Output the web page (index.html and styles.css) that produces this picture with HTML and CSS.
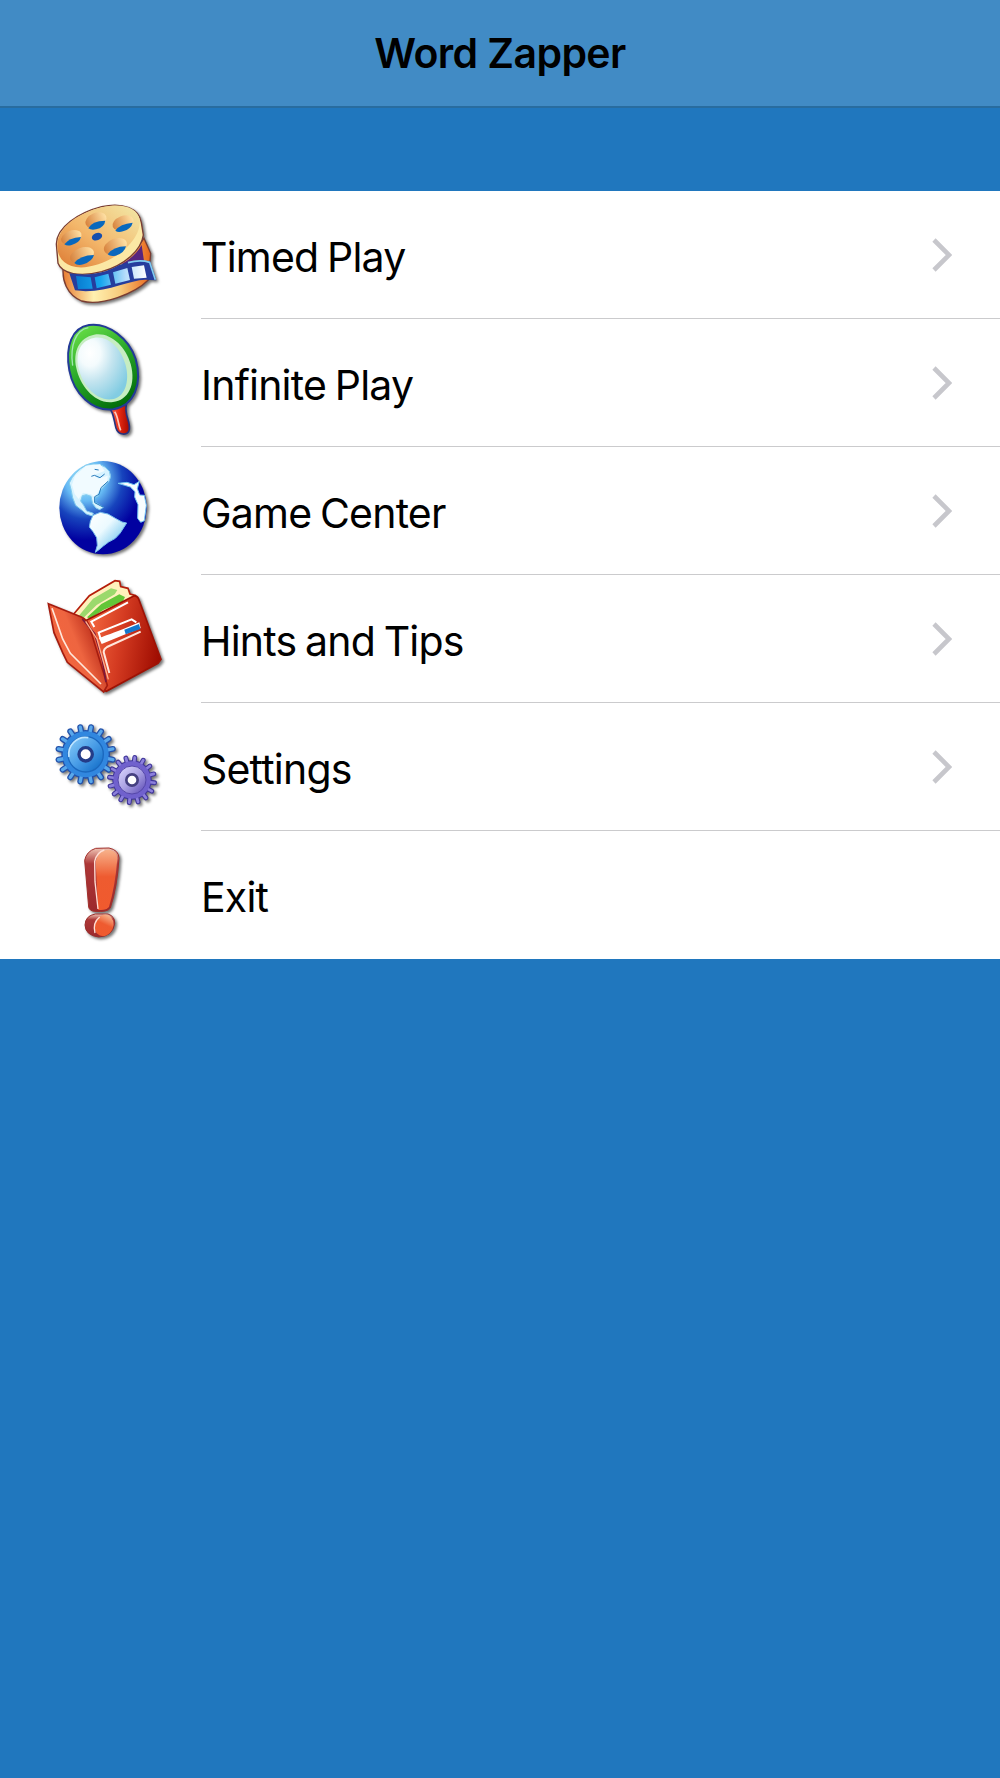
FILE: index.html
```html
<!DOCTYPE html>
<html lang="en">
<head>
    <meta charset="UTF-8">
    <meta name="viewport" content="width=device-width, initial-scale=1.0">
    <title>Word Zapper</title>
    <link rel="stylesheet" href="styles.css">
</head>
<body>
    <header class="navbar">
        <h1>Word Zapper</h1>
    </header>

    <ul class="menu">
        <li class="menu-item">
            <svg class="icon" viewBox="0 3 390 384">
                <defs>
                    <linearGradient id="reel-top" x1="0" y1="1" x2="1" y2="0">
                        <stop offset="0" stop-color="#dc7932"/>
                        <stop offset=".45" stop-color="#f3b66a"/>
                        <stop offset="1" stop-color="#f2e9a8"/>
                    </linearGradient>
                    <linearGradient id="reel-side">
                        <stop offset="0" stop-color="#e87c32"/>
                        <stop offset=".35" stop-color="#fff0b0"/>
                        <stop offset=".65" stop-color="#f8cc7d"/>
                        <stop offset="1" stop-color="#e96519"/>
                    </linearGradient>
                    <linearGradient id="reel-hole">
                        <stop offset="0" stop-color="#d7823d"/>
                        <stop offset="1" stop-color="#ffe2a6"/>
                    </linearGradient>
                    <linearGradient id="film" gradientUnits="userSpaceOnUse" x1="108" y1="0" x2="320" y2="0">
                        <stop offset="0" stop-color="#087bd0"/>
                        <stop offset=".35" stop-color="#18a6ee"/>
                        <stop offset=".7" stop-color="#b6ddfb"/>
                        <stop offset="1" stop-color="#fff"/>
                    </linearGradient>
                </defs>
                <path d="M70 230C65 270 80 315 125 333C185 350 285 310 325 270L332 190L312 145L270 200Z" fill="url(#reel-side)" stroke="#793c32" stroke-width="4"/>
                <path d="M245 222Q285 200 305 165L312 213L290 225Z" fill="#58247e"/>
                <path d="M49 162C50 112 115 68 185 50C250 36 298 56 304 98L310 135C304 180 255 225 185 245C120 262 66 252 54 220Z" fill="#fbe8a4" stroke="#793c32" stroke-width="4"/>
                <path d="M52 172C48 110 120 68 185 52C245 38 294 52 299 90C304 145 240 202 175 223C105 246 55 225 52 172Z" fill="url(#reel-top)"/>
                <g fill="url(#reel-hole)">
                    <ellipse cx="168" cy="91" rx="33" ry="22" transform="rotate(-22 168 91)"/>
                    <ellipse cx="249" cy="99" rx="33" ry="21" transform="rotate(-22 249 99)"/>
                    <ellipse cx="94" cy="142" rx="32" ry="20" transform="rotate(-22 94 142)"/>
                    <ellipse cx="226" cy="169" rx="36" ry="23" transform="rotate(-22 226 169)"/>
                    <ellipse cx="126" cy="196" rx="37" ry="23" transform="rotate(-20 126 196)"/>
                </g>
                <g fill="#0968bd">
                    <path d="M145 115Q155 93 196 92Q193 112 168 118Q153 121 145 115Z"/>
                    <path d="M226 122Q240 101 278 98Q274 116 249 124Q234 129 226 122Z"/>
                    <path d="M73 163Q86 144 123 141Q119 158 95 165Q81 169 73 163Z"/>
                    <path d="M203 193Q219 170 258 169Q253 190 227 197Q211 201 203 193Z"/>
                    <path d="M103 219Q120 196 162 195Q157 214 130 223Q112 228 103 219Z"/>
                    <ellipse cx="171" cy="140" rx="16" ry="11" transform="rotate(-20 171 140)" fill="#174ead"/>
                </g>
                <path d="M88 250Q165 261 220 234Q270 205 330 213L349 271L315 269C265 270 190 314 105 301Z" fill="#263d9d"/>
                <path d="M108 258L152 262L158 296L114 297ZM164 262L205 251L213 284L170 295ZM219 247L262 234L270 270L226 281ZM275 231L312 226L320 263L282 266Z" fill="url(#film)"/>
                <path d="M264 218Q300 208 329 217L346 269" fill="none" stroke="#80ccf0" stroke-width="5"/>
            </svg>
            <span class="label">Timed Play</span>
            <svg class="chevron" viewBox="0 0 20 34"><path d="M2 2L17 17L2 32"/></svg>
        </li>

        <li class="menu-item">
            <svg class="icon" viewBox="0 10 390 384">
                <defs>
                    <linearGradient id="rim" x1=".2" y1="0" x2=".7" y2="1">
                        <stop offset="0" stop-color="#68df45"/>
                        <stop offset=".45" stop-color="#2caa2b"/>
                        <stop offset="1" stop-color="#006b09"/>
                    </linearGradient>
                    <radialGradient id="glass" cx=".25" cy=".25" r=".85">
                        <stop offset="0" stop-color="#fff"/>
                        <stop offset=".25" stop-color="#f4fbfd"/>
                        <stop offset=".55" stop-color="#c3e4ef"/>
                        <stop offset="1" stop-color="#82cce2"/>
                    </radialGradient>
                    <linearGradient id="handle">
                        <stop offset="0" stop-color="#ff7659"/>
                        <stop offset=".5" stop-color="#e52911"/>
                        <stop offset="1" stop-color="#a40800"/>
                    </linearGradient>
                </defs>
                <path d="M207 277C220 285 221 310 228 337C235 360 264 361 268 341C271 315 252 297 259 268Z" fill="url(#handle)" stroke="#26327f" stroke-width="5"/>
                <path d="M224 288C235 303 233 322 242 344" fill="none" stroke="#ffc9bd" stroke-width="5"/>
                <path d="M147 28C205 20 267 69 287 130C308 205 283 269 220 281C157 288 101 234 88 164C75 91 96 36 147 28Z" fill="url(#rim)" stroke="#233a97" stroke-width="6"/>
                <path d="M145 36C108 43 89 87 98 150" fill="none" stroke="#a0e7b0" stroke-width="4"/>
                <path d="M162 57C211 48 257 92 272 145C289 207 265 254 219 259C163 266 119 208 109 157C98 105 119 66 162 57Z" fill="#c6edc2"/>
                <path d="M161 67C202 58 242 96 256 145C272 200 252 248 215 251C167 256 126 207 115 155C106 109 122 75 161 67Z" fill="url(#glass)"/>
            </svg>
            <span class="label">Infinite Play</span>
            <svg class="chevron" viewBox="0 0 20 34"><path d="M2 2L17 17L2 32"/></svg>
        </li>

        <li class="menu-item">
            <svg class="icon" viewBox="0 6 390 384">
                <defs>
                    <radialGradient id="ocean" cx=".3" cy=".2" r=".65">
                        <stop offset="0" stop-color="#a9edff"/>
                        <stop offset=".35" stop-color="#66baf4"/>
                        <stop offset=".65" stop-color="#1744bd"/>
                        <stop offset="1" stop-color="#0101a0"/>
                    </radialGradient>
                    <linearGradient id="south" x1="0" y1="0" x2="1" y2="1">
                        <stop offset="0" stop-color="#fff"/>
                        <stop offset=".4" stop-color="#ecfaff"/>
                        <stop offset=".8" stop-color="#78c8ef"/>
                    </linearGradient>
                </defs>
                <ellipse cx="189" cy="188" rx="131" ry="140" fill="url(#ocean)"/>
                <path d="M88 114Q102 81 137 61Q184 47 208 79Q216 96 206 110L190 126L180 137L174 154L166 157L164 171L179 180L190 187L179 194L168 189L158 176L153 154L139 149L127 152L122 168L131 181L140 198L160 205L157 213L139 207L124 194L107 181L98 158L94 137Z" fill="#d7f3ff" stroke="#83ccee" stroke-width="3"/>
                <path d="M105 92L139 62L180 57L194 78L163 89L174 101L203 92L202 109L176 139L164 157L153 148L129 143L116 162L104 147L96 119Z" fill="#fafeff" opacity=".75"/>
                <path d="M204 109L183 128L177 148L164 155L164 173L181 182L190 186M154 94L163 91L180 98L194 87M164 73L176 75" fill="none" stroke="#287bbd" stroke-width="3"/>
                <path d="M159 211L181 202L204 207L226 220L246 231L260 234L251 248L240 265L226 280L206 291L190 303L177 314L166 322L172 301L170 278L159 260L148 246L151 229Z" fill="url(#south)" stroke="#78bdeb" stroke-width="3"/>
                <path d="M234 115L261 112L282 119L298 109L292 131L299 150L313 151L319 181L313 227L302 232L293 220L294 179L284 156L285 140L271 126L254 121Z" fill="#f8fdff" stroke="#72c5f1" stroke-width="3"/>
            </svg>
            <span class="label">Game Center</span>
            <svg class="chevron" viewBox="0 0 20 34"><path d="M2 2L17 17L2 32"/></svg>
        </li>

        <li class="menu-item">
            <svg class="icon" viewBox="0 15 390 384">
                <defs>
                    <linearGradient id="cover" x1="0" y1=".4" x2="1" y2=".6">
                        <stop offset="0" stop-color="#f56a40"/>
                        <stop offset=".45" stop-color="#d53c22"/>
                        <stop offset="1" stop-color="#9d0b00"/>
                    </linearGradient>
                    <linearGradient id="flap" x1=".2" y1=".8" x2="1" y2=".3">
                        <stop offset="0" stop-color="#f4663e"/>
                        <stop offset=".45" stop-color="#ee6540"/>
                        <stop offset="1" stop-color="#a41308"/>
                    </linearGradient>
                </defs>
                <path d="M98 136L148 77L225 32L239 34L242 50L264 55L270 72L286 76L293 105L151 174Z" fill="#fff0bc" stroke="#b51d0b" stroke-width="5"/>
                <path d="M111 144L159 86L213 55L232 60L224 73L170 105L120 154Z" fill="#9bd96c"/>
                <path d="M141 142L184 102L238 73L255 81L248 95L191 119L150 146Z" fill="#63c638"/>
                <path d="M135 153L281 78Q291 75 296 87L363 268L354 280L199 364L187 359Z" fill="url(#cover)" stroke="#9e1205" stroke-width="5"/>
                <path d="M25 101L124 141Q143 150 149 172L202 346L191 366L82 277L68 248L42 188Z" fill="url(#flap)" stroke="#a51c0f" stroke-width="5"/>
                <path d="M36 115L45 140L68 207L91 250L183 342" fill="none" stroke="#ffe7db" stroke-width="5"/>
                <path d="M127 147L164 191L187 270L198 336" fill="none" stroke="#7c183c" stroke-width="5"/>
                <path d="M137 154L171 207L205 328" fill="none" stroke="#ffb18d" stroke-width="4"/>
                <path d="M163 171L154 155L264 97M182 207L176 188L275 148L289 157" fill="none" stroke="#fff" stroke-width="6"/>
                <path d="M177 204Q190 200 248 178L298 157L302 174L185 222Z" fill="#fff"/>
                <path d="M253 179L297 162L301 177L257 193Z" fill="#1477cd"/>
                <path d="M208 309L191 246Q191 237 201 231L302 185" fill="none" stroke="#ffe7dc" stroke-width="6"/>
            </svg>
            <span class="label">Hints and Tips</span>
            <svg class="chevron" viewBox="0 0 20 34"><path d="M2 2L17 17L2 32"/></svg>
        </li>

        <li class="menu-item">
            <svg class="icon" viewBox="0 7 390 384">
                <defs>
                    <!-- 8 spokes through the middle = 16 teeth -->
                    <path id="teeth" stroke-linecap="round" d="M-83 0H83M-76.7 -31.8L76.7 31.8M-58.7 -58.7L58.7 58.7M-31.8 -76.7L31.8 76.7M0 -83V83M31.8 -76.7L-31.8 76.7M58.7 -58.7L-58.7 58.7M76.7 -31.8L-76.7 31.8"/>
                    <linearGradient id="blue-gear" x1="0" y1="0" x2="1" y2="1">
                        <stop offset="0" stop-color="#8dcff9"/>
                        <stop offset=".5" stop-color="#499de7"/>
                        <stop offset="1" stop-color="#0965c2"/>
                    </linearGradient>
                    <linearGradient id="purple-gear" x1="0" y1="0" x2="1" y2="1">
                        <stop offset="0" stop-color="#dedaff"/>
                        <stop offset=".5" stop-color="#aaa1e3"/>
                        <stop offset="1" stop-color="#5947b3"/>
                    </linearGradient>
                </defs>
                <g transform="translate(137 161)">
                    <g transform="rotate(11.25)">
                        <use href="#teeth" stroke="#2352ab" stroke-width="18"/>
                        <circle r="73" fill="#2352ab"/>
                        <use href="#teeth" stroke="#5aa8eb" stroke-width="10"/>
                    </g>
                    <circle r="69" fill="#3187df"/>
                    <circle r="53" fill="url(#blue-gear)" stroke="#1b68be" stroke-width="4"/>
                    <path d="M-50 8A50 50 0 0 1 8 -50" fill="none" stroke="#bce4ff" stroke-width="5"/>
                    <circle r="20" fill="#fff" stroke="#243c88" stroke-width="10"/>
                </g>
                <g transform="translate(276 238)">
                    <g transform="rotate(7) scale(.82)">
                        <use href="#teeth" stroke="#40369a" stroke-width="18"/>
                        <circle r="72" fill="#40369a"/>
                        <use href="#teeth" stroke="#8c80dc" stroke-width="10"/>
                    </g>
                    <circle r="56" fill="#7061cd"/>
                    <circle r="42" fill="url(#purple-gear)" stroke="#5547aa" stroke-width="3"/>
                    <circle r="17" fill="#fff" stroke="#454080" stroke-width="8"/>
                </g>
            </svg>
            <span class="label">Settings</span>
            <svg class="chevron" viewBox="0 0 20 34"><path d="M2 2L17 17L2 32"/></svg>
        </li>

        <li class="menu-item">
            <svg class="icon" viewBox="0 3 390 384">
                <defs>
                    <linearGradient id="mark" x1="0" y1="0" x2="0" y2="1">
                        <stop offset="0" stop-color="#f7b28b"/>
                        <stop offset=".45" stop-color="#ee5b30"/>
                        <stop offset="1" stop-color="#f05a2e"/>
                    </linearGradient>
                    <linearGradient id="mark-side" x1="0" y1="0" x2="0" y2="1">
                        <stop offset="0" stop-color="#f0c6b6"/>
                        <stop offset=".25" stop-color="#ad3737"/>
                        <stop offset="1" stop-color="#9b292c"/>
                    </linearGradient>
                </defs>
                <path d="M134 91Q139 64 167 55L207 54Q236 60 237 84Q232 170 211 234Q203 247 163 244Q148 242 146 231Z" fill="url(#mark-side)" stroke="#a12f2b" stroke-width="3"/>
                <path d="M167 93Q177 58 207 59Q233 64 232 86Q226 166 207 231Q197 242 174 239Z" fill="url(#mark)"/>
                <path d="M174 237L165 155L164 94Q171 66 193 60" fill="none" stroke="#ffded3" stroke-width="4"/>
                <path d="M135 285Q136 257 166 252L204 252Q225 259 224 280Q219 319 176 321Q136 316 135 285Z" fill="url(#mark-side)" stroke="#992c2a" stroke-width="3"/>
                <ellipse cx="192" cy="286" rx="28" ry="33" transform="rotate(25 192 286)" fill="url(#mark)"/>
                <path d="M165 309Q157 278 179 261" fill="none" stroke="#ffded3" stroke-width="4"/>
            </svg>
            <span class="label">Exit</span>
        </li>
    </ul>
</body>
</html>
```

FILE: styles.css
```css
body {
    margin: 0;
    min-height: 100vh;
    background: #2077be;
    font-family: Inter, "Liberation Sans", sans-serif;
    color: #000;
}
.navbar {
    box-sizing: border-box;
    height: 108px;
    background: #418bc5;
    border-bottom: 2px solid #286c9f;
    text-align: center;
}
h1 {
    margin: 0;
    padding-top: 28px;
    font-size: 41px;
    line-height: 50px;
    font-weight: 600;
    letter-spacing: -0.6px;
}
.menu {
    list-style: none;
    margin: 83px 0 0;
    padding: 0;
    background: white;
}
.menu-item {
    display: flex;
    align-items: center;
    height: 128px;
    padding: 0 48px 0 40px;
    /* separator starts under the label, not under the icon */
    background: linear-gradient(#cbcbcd, #cbcbcd) 201px 100% / 100% 1px no-repeat;
}
.menu-item:last-child {
    background: none;
}
.icon {
    width: 130px;
    height: 128px;
    filter: drop-shadow(2px 2px 1.5px rgba(0,0,0,0.55));
}
.label {
    flex: 1;
    padding: 3px 0 0 31px;
    font-size: 41px;
    line-height: 50px;
    letter-spacing: -0.8px;
    word-spacing: -2px;
}
.chevron {
    width: 20px;
    height: 34px;
    fill: none;
    stroke: #c7c7cc;
    stroke-width: 4.6;
}
```
